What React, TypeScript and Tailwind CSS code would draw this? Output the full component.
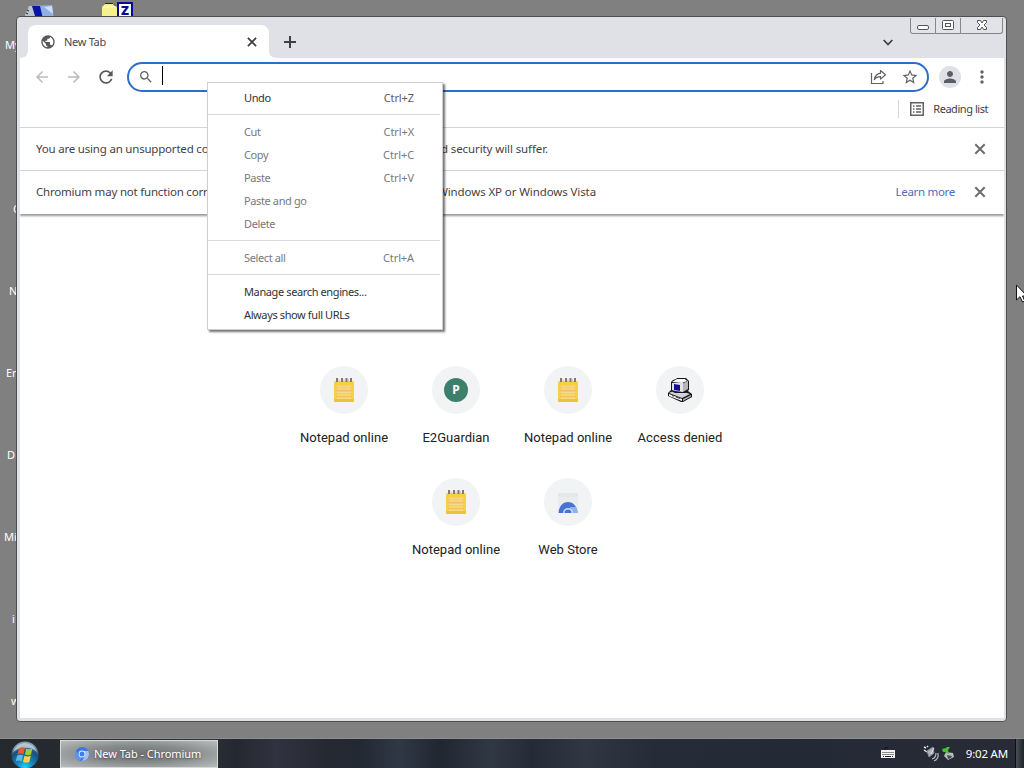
import { Fragment } from "react";
import {
  MdArrowBack,
  MdArrowForward,
  MdMoreVert,
  MdPerson,
  MdPublic,
  MdRefresh,
  MdSearch,
  MdStarBorder,
} from "react-icons/md";

const desktopLabels = [
  { text: "My", pos: "left-[5px] top-[37px]" },
  { text: "G", pos: "left-[13px] top-[201px]" },
  { text: "N", pos: "left-[9px] top-[283px]" },
  { text: "Er", pos: "left-[6px] top-[365px]" },
  { text: "D", pos: "left-[7px] top-[447px]" },
  { text: "Mi", pos: "left-[4px] top-[529px]" },
  { text: "i", pos: "left-[12px] top-[611px]" },
  { text: "w", pos: "left-[11px] top-[693px]" },
];

const menuGroups = [
  [{ label: "Undo", shortcut: "Ctrl+Z", enabled: true }],
  [
    { label: "Cut", shortcut: "Ctrl+X" },
    { label: "Copy", shortcut: "Ctrl+C" },
    { label: "Paste", shortcut: "Ctrl+V" },
    { label: "Paste and go" },
    { label: "Delete" },
  ],
  [{ label: "Select all", shortcut: "Ctrl+A" }],
  [
    { label: "Manage search engines...", enabled: true },
    { label: "Always show full URLs", enabled: true },
  ],
] as { label: string; shortcut?: string; enabled?: boolean }[][];

const shortcutRows = [
  [
    { label: "Notepad online", icon: <NotepadIcon /> },
    { label: "E2Guardian", icon: <LetterIcon /> },
    { label: "Notepad online", icon: <NotepadIcon /> },
    { label: "Access denied", icon: <ComputerIcon /> },
  ],
  [
    { label: "Notepad online", icon: <NotepadIcon /> },
    { label: "Web Store", icon: <WebStoreIcon /> },
  ],
];

function NotepadIcon() {
  return (
    <svg width="24" height="24" viewBox="0 0 24 24">
      <rect x="2" y="3" width="20" height="21" rx="1.5" fill="#f6cf45" />
      <path d="M2 21h20v1.5a1.5 1.5 0 0 1-1.5 1.5h-17A1.5 1.5 0 0 1 2 22.500z" fill="#eec33c" />
      <path d="M5 8.500h14M5 11h14M5 14.500h14M5 17h14M5 20h14" stroke="#f8d98c" strokeWidth="1.300" />
      <path d="M5 12.500h14M5 18.500h14" stroke="#f2bd62" strokeWidth="1" />
      <path d="M5 0v4M10 0v4M14.500 0v4M19 0v4" stroke="#8a7670" strokeWidth="2" />
      <path d="M7 1v3M12 1v3M16.500 1v3" stroke="#d9c7ad" strokeWidth="1" />
    </svg>
  );
}

function LetterIcon() {
  return (
    <div className="flex size-6 items-center justify-center rounded-full bg-[#3d8069] font-['Noto_Sans',sans-serif] text-[12px] font-bold text-white">
      P
    </div>
  );
}

function ComputerIcon() {
  return (
    <svg width="24" height="24" viewBox="0 0 24 24">
      <path d="M0 15l3-3 2-1 15 2 4 3v3l-9 5h-2L0 18z" fill="#15151c" />
      <path d="M1 15l4-2 14 2 3 1-8 4z" fill="#d4d4d8" />
      <path d="M1 16l13 5v2L1 18z" fill="#f4f4f4" />
      <path d="M15 21l8-4v1.500l-8 4.500z" fill="#a9a9ad" />
      <path d="M3 4l2-2 3-1 1-1h9l3 3v9l-3 2-1 1H7l-4-2z" fill="#15151c" />
      <path d="M4 4l5-3h8l2 2-5 2z" fill="#f6f6f6" />
      <path d="M4 5l11 0v9l-8-1-3-1z" fill="#e2e2e6" />
      <path d="M15 5.500l5-3v8.500l-5 3z" fill="#b4b4ba" />
      <path d="M6 6l6 1v6l-6-1z" fill="#12128c" />
      <path d="M4 17.500l2 .8M8 19l4 1.500" stroke="#444" strokeWidth="1" />
    </svg>
  );
}

function WebStoreIcon() {
  return (
    <svg width="24" height="24" viewBox="0 0 24 24">
      <path d="M2 3h20v19H2z" fill="#e9edf0" />
      <path d="M2 3h20v4H2z" fill="#e4e8ec" />
      <path d="M2.500 23a9.500 11 0 0 1 19 0z" fill="#4774d2" />
      <path d="M14 17h6q1.500 2 1.500 6H15z" fill="#8fb2ef" />
      <path d="M7 23a5 5 0 0 1 10 0z" fill="#cfdff8" />
      <path d="M8.500 23a3.500 3.500 0 0 1 7 0z" fill="#4774d2" />
    </svg>
  );
}

function CloseIcon({ className }: { className: string }) {
  return (
    <svg className={className} viewBox="0 0 16 16" fill="none" stroke="currentColor" strokeWidth="2">
      <path d="M3.300 3.300l9.400 9.400M12.700 3.300l-9.400 9.400" />
    </svg>
  );
}

function ShareIcon() {
  return (
    <svg width="17" height="16" viewBox="0 0 17 16" fill="none" stroke="#5f6368" strokeWidth="1.200">
      <path d="M1.500 4v10.500h11.500v-2.500" />
      <path
        d="M10.500 1.500l5 4.300-5 4.300V7.600C7.500 7.600 5.700 8.500 4.300 10.600c.5-3.200 2.300-5.900 6.200-6.500z"
        strokeLinejoin="round"
      />
    </svg>
  );
}

function ReadingListIcon() {
  return (
    <svg width="14" height="14" viewBox="0 0 14 14" fill="none" stroke="#5f6368" strokeWidth="1.500">
      <rect x=".75" y=".75" width="12.500" height="12.500" />
      <path d="M3 4h1.500M6 4h5M3 7h1.500M6 7h5M3 10h1.500M6 10h5" strokeWidth="1.500" />
    </svg>
  );
}

function WindowControls() {
  return (
    <div className="mr-px flex h-[16px] w-[93px] rounded-b-[3px] border border-t-0 border-[#85878b] bg-[#e1e3e8]">
      <div className="flex w-[25px] justify-center border-r border-[#85878b]">
        <svg width="14" height="15" viewBox="0 0 14 15">
          <rect x="1.500" y="7.500" width="11" height="4" rx="1.500" fill="#fff" stroke="#555" />
        </svg>
      </div>
      <div className="flex w-[25px] justify-center border-r border-[#85878b]">
        <svg width="14" height="15" viewBox="0 0 14 15" fill="#fff" stroke="#555">
          <rect x="1.500" y="2.500" width="11" height="9" rx="1" />
          <rect x="4.500" y="5.500" width="5" height="3" />
        </svg>
      </div>
      <div className="flex flex-1 justify-center">
        <svg width="14" height="15" viewBox="0 0 14 15">
          <path
            d="M2.500 2.500h3L7 5l1.500-2.500h3v2L9 7l2.500 2.500v2h-3L7 9l-1.500 2.500h-3v-2L5 7 2.500 4.500z"
            fill="#fff"
            stroke="#555"
            strokeLinejoin="round"
          />
        </svg>
      </div>
    </div>
  );
}

function TabStrip() {
  return (
    <div className="flex h-10 justify-between bg-[#dfe1e6]">
      <div className="flex">
        <svg className="mt-8 -mr-px" width="9" height="8" viewBox="0 0 9 8">
          <path d="M9 0v8H0c5 0 8-3 8-8z" fill="#fff" />
        </svg>
        <div className="mt-[7px] flex h-[33px] w-[241px] items-center rounded-t-lg bg-white pr-[10px] pl-[12px]">
          <MdPublic className="size-4 text-[#55585c]" />
          <span className="mt-px ml-2 flex-1 text-[11px] tracking-[-0.3px] text-[#45484c]">New Tab</span>
          <CloseIcon className="size-[14px] text-[#3c4043]" />
        </div>
        <svg className="mt-8 -ml-px" width="9" height="8" viewBox="0 0 9 8">
          <path d="M0 0v8h9C4 8 1 5 1 0z" fill="#fff" />
        </svg>
        <svg className="mt-[18px] ml-[7px]" width="12" height="12" viewBox="0 0 12 12">
          <path d="M6 0v12M0 6h12" stroke="#3c4043" strokeWidth="2" />
        </svg>
      </div>
      <div className="flex items-start">
        <svg className="mt-[21px] mr-[17px]" width="10" height="8" viewBox="0 0 10 8">
          <path d="M.700 1L5 5.500l4.300-4.500" fill="none" stroke="#3c4043" strokeWidth="1.800" />
        </svg>
        <WindowControls />
      </div>
    </div>
  );
}

function Toolbar() {
  return (
    <div className="flex h-[38px] items-center bg-white pl-[13px]">
      <MdArrowBack className="size-[18px] text-[#b9bbbe]" />
      <MdArrowForward className="ml-[14px] size-[18px] text-[#b9bbbe]" />
      <MdRefresh className="ml-[13px] size-[20px] text-[#55585c]" />
      <div className="ml-[11px] flex h-[30px] w-[802px] items-center rounded-full border-2 border-[#2b6fc6] bg-white pr-[8px] pl-[9px]">
        <MdSearch className="size-4 text-[#5f6368]" />
        <div className="mb-1 ml-[8px] h-[19px] w-px bg-black" />
        <div className="flex-1" />
        <ShareIcon />
        <MdStarBorder className="ml-[14px] size-[18px] text-[#5f6368]" />
      </div>
      <div className="ml-[10px] flex size-[22px] items-center justify-center rounded-full bg-[#dfe1e6]">
        <MdPerson className="size-[18px] text-[#5a5d66]" />
      </div>
      <MdMoreVert className="ml-[11px] size-[20px] text-[#5f6368]" />
    </div>
  );
}

// The open context menu hides the middle of each message, so only both ends are laid out.
function InfoBar({ start, end, endClass, link }: { start: string; end: string; endClass: string; link?: string }) {
  return (
    <div className="flex h-[43px] items-center border-t border-[#d3d5d8] bg-white px-[16px] text-[11.500px] whitespace-nowrap text-[#3f4246]">
      <span className="w-[171px] tracking-[-0.2px]">{start}</span>
      <span className={`ml-[229px] flex justify-end ${endClass}`}>
        <span>{end}</span>
      </span>
      <div className="flex-1" />
      {link && <span className="mr-[17px] tracking-[-0.3px] text-[#4a6fc0]">{link}</span>}
      <CloseIcon className="size-4 text-[#6b6d70]" />
    </div>
  );
}

function NewTabPage() {
  return (
    <div className="flex flex-1 flex-col items-center bg-white pt-[152px]">
      {shortcutRows.map((row, i) => (
        <div key={i} className="flex h-[112px]">
          {row.map((item, idx) => (
            <div key={idx} className="flex w-[112px] flex-col items-center">
              <div className="flex size-12 items-center justify-center rounded-full bg-[#f1f3f4]">
                {item.icon}
              </div>
              <span className="mt-[14px] font-[Roboto,sans-serif] text-[13px] leading-[20px] tracking-[0.03px] whitespace-nowrap text-[#202124]">
                {item.label}
              </span>
            </div>
          ))}
        </div>
      ))}
    </div>
  );
}

function ContextMenu() {
  return (
    <div className="absolute top-[82px] left-[207px] w-[236px] border border-[#cfcfcf] bg-white pt-[4px] pb-[2px] text-[11px] shadow-[2px_2px_2px_rgba(0,0,0,0.55)]">
      {menuGroups.map((group, i) => (
        <Fragment key={i}>
          {i > 0 && <div className="mt-[4px] mr-[2px] mb-[6px] h-px bg-[#d9dadc]" />}
          {group.map((item) => (
            <div
              key={item.label}
              className={`flex h-[23px] items-center justify-between pr-[28px] pl-[36px] ${item.enabled ? "text-[#303236]" : "text-[#77797c]"}`}
            >
              <span className="tracking-[-0.38px]">{item.label}</span>
              <span className={`tracking-[-0.1px] ${item.enabled ? "text-[#5a5c60]" : ""}`}>{item.shortcut}</span>
            </div>
          ))}
        </Fragment>
      ))}
    </div>
  );
}

function ChromiumIcon() {
  return (
    <svg width="14" height="14" viewBox="0 0 14 14">
      <circle cx="7" cy="7" r="7" fill="#3f78dc" />
      <path d="M7 4h6.300A7 7 0 0 1 7 14l3-5z" fill="#9dc4fa" />
      <path d="M1 3.500L4 9l3 1-2 3.700A7 7 0 0 1 1 3.500z" fill="#5b97f2" />
      <circle cx="7" cy="7" r="3.400" fill="#e8f1ff" />
      <circle cx="7" cy="7" r="2.500" fill="#3f7fe8" />
    </svg>
  );
}

function StartOrb() {
  return (
    <svg width="28" height="28" viewBox="0 0 28 28">
      <defs>
        <radialGradient id="orb" cx=".5" cy=".95" r=".85">
          <stop offset="0" stopColor="#25d5f5" />
          <stop offset=".35" stopColor="#1583be" />
          <stop offset=".75" stopColor="#1c4f7b" />
          <stop offset="1" stopColor="#7f9db0" />
        </radialGradient>
      </defs>
      <circle cx="14" cy="14" r="13.500" fill="url(#orb)" />
      <path d="M2 11A12.500 12.500 0 0 1 26 11C20 5 8 6 2 11z" fill="#c7d8e0" opacity=".75" />
      <path d="M8 7.500q3-2 6-.5l-1.500 6q-3-1-6 .5z" fill="#ec5a2c" />
      <path d="M15 7.500q3 1.500 6.500 0L20 13.500q-3 1.500-6 0z" fill="#9ccb3b" />
      <path d="M6.200 14.500q3-1.500 6-.3L10.700 20q-3-1.300-6 .2z" fill="#62b5ec" />
      <path d="M13.500 14.800q3 1.500 6.300 0L18.300 21q-3.300 1.300-6.300-.3z" fill="#fbd243" />
    </svg>
  );
}

function Taskbar() {
  return (
    <div className="absolute bottom-0 left-0 flex h-[30px] w-full items-center border-t border-[#8c8e90] bg-[linear-gradient(90deg,#23292d_0%,#2b3036_20%,#252830_23%,#30333f_27%,#262932_32%,#222832_35%,#303845_39%,#202731_43%,#303844_48%,#252b36_52%,#303642_57%,#262c37_64%,#232a36_78%,#292b36_100%)]">
      <div className="mt-[2px] ml-[11px]">
        <StartOrb />
      </div>
      <div className="ml-[21px] flex h-[28px] w-[158px] items-center border border-[#d7d9da] bg-[radial-gradient(ellipse_at_center,#6f7375_0%,#85898a_45%,#b9bcbd_100%)] pl-[14px] text-[11px] text-white">
        <ChromiumIcon />
        <span className="mt-px ml-[5px] tracking-[-0.050px] whitespace-nowrap [text-shadow:0_1px_2px_#444]">
          New Tab - Chromium
        </span>
      </div>
      <div className="flex-1" />
      <svg className="mr-[26px] mb-[3px]" width="16" height="14" viewBox="0 0 16 14">
        <path d="M5 5V3q1-1 3 0" stroke="#111" fill="none" />
        <rect x="1" y="5" width="14" height="8" fill="#f2f2f2" />
        <path d="M2.500 7.500h11M2.500 9.500h11" stroke="#222" strokeDasharray="1 1" />
        <path d="M3 11.500h10" stroke="#222" strokeDasharray="1 1 6 1" />
      </svg>
      <svg className="mr-px mb-[2px]" width="18" height="18" viewBox="0 0 18 18" fill="none">
        <path d="M2 3l2 1M2 6l3 2M5 2l1 1" stroke="#e6e6e6" strokeWidth="1.500" />
        <path d="M5 7l6-4 1 6-5 4z" fill="#aeb3b9" stroke="#858b92" />
        <path d="M9 10l3-6" stroke="#e5e5e5" />
        <path d="M10 15q4-1 4-6M12 17q5-2 4-8" stroke="#b9bdc2" strokeWidth="1.200" />
      </svg>
      <svg className="mr-[11px] mb-[2px]" width="14" height="18" viewBox="0 0 14 18">
        <path d="M5 8l7 1 1 4-6 3-4-4z" fill="#b7bcc1" />
        <path d="M6 11l5 1-1 2-3 1z" fill="#454c54" />
        <path d="M1 5l4-1 1-1 3 0-2 3 1 4-4-2-2 0z" fill="#45c52d" />
      </svg>
      <span className="mr-[7px] text-[11.500px] tracking-[-0.2px] whitespace-nowrap text-white">9:02 AM</span>
      <div className="h-full w-[9px] border-l border-[#0c0e11] bg-gradient-to-r from-[#4a5055] to-[#1d2529]" />
    </div>
  );
}

export default function App() {
  return (
    <div className="relative h-[768px] w-[1024px] overflow-hidden bg-[#808080] font-['Noto_Sans',sans-serif]">
      {desktopLabels.map((item) => (
        <span key={item.text} className={`absolute text-[11px] leading-[16px] text-white ${item.pos}`}>
          {item.text}
        </span>
      ))}
      <svg className="absolute top-[2px] left-[24px]" width="32" height="17" viewBox="0 0 32 17">
        <path d="M1 13l4-9h4l4 10v3H3z" fill="#b9c4cf" />
        <path d="M2 11l2 1M3 8l2 1" stroke="#222" />
        <path d="M8 4l20-1 2 14H12z" fill="#8fb0e4" />
        <path d="M8 4h8l3 13h-7z" fill="#0714a5" />
        <path d="M20 5l8-1 1 8z" fill="#cfdef8" />
      </svg>
      <svg className="absolute top-[3px] left-[102px]" width="17" height="15" viewBox="0 0 17 15">
        <path d="M0 4l4-4h7l4 4v11H0z" fill="#f6f08e" />
        <path d="M3 .5h8l4 4" fill="none" stroke="#222" />
        <path d="M1 4h14" stroke="#fffccc" />
      </svg>
      <div className="absolute top-[2px] left-[117px] flex size-[16px] items-center justify-center border-2 border-[#0808a0] bg-white text-[13px] leading-none font-black text-[#0808a0]">
        Z
      </div>

      <div className="absolute top-[16px] left-[16px] flex h-[706px] w-[991px] flex-col overflow-hidden rounded-[4px] border border-[#4d4f51] bg-[#dfe1e4] pt-px pr-[2px] pb-[3px] pl-[3px]">
        <TabStrip />
        <Toolbar />
        <div className="flex h-[31px] items-center justify-end bg-white pr-[16px] pb-[5px] text-[11px] text-[#3f4246]">
          <div className="mr-[11px] h-[18px] w-px bg-[#d5d7da]" />
          <ReadingListIcon />
          <span className="ml-[9px] tracking-[-0.45px]">Reading list</span>
        </div>
        <div className="relative bg-white pb-px shadow-[0_2px_2px_rgba(0,0,0,0.4)] [clip-path:inset(0_0_-5px_0)]">
          <InfoBar
            start="You are using an unsupported co"
            end="d security will suffer."
            endClass="w-[112px] tracking-[-0.1px]"
          />
          <InfoBar
            start="Chromium may not function corr"
            end="Windows XP or Windows Vista"
            endClass="w-[160px] tracking-[-0.1px]"
            link="Learn more"
          />
        </div>
        <NewTabPage />
      </div>

      <ContextMenu />
      <Taskbar />
      <svg className="absolute top-[284px] left-[1016px]" width="12" height="19" viewBox="0 0 12 19">
        <path d="M.500 1v15l3.500-3.300L6.500 18l2.300-1-2.300-5H11z" fill="#fff" stroke="#111" />
      </svg>
    </div>
  );
}
